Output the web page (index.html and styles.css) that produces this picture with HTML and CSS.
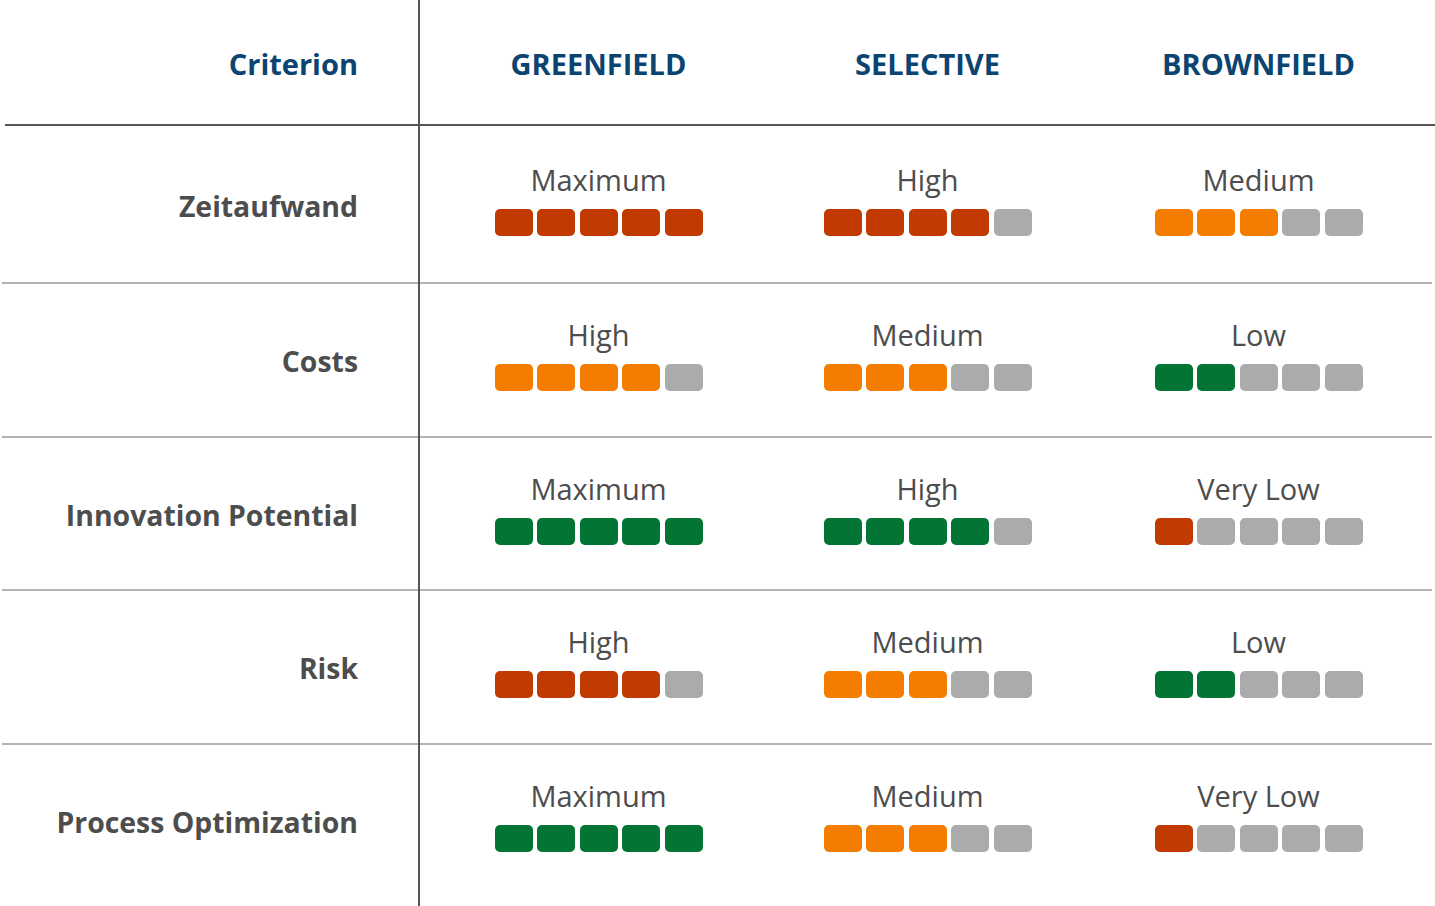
FILE: index.html
```html
<!DOCTYPE html>
<html lang="en">
<head>
<meta charset="utf-8">
<title>Criterion comparison</title>
<link rel="stylesheet" href="styles.css">
</head>
<body>
<div class="table">
  <div class="row head">
    <div class="crit">Criterion</div>
    <div class="cells">
      <div class="cell">GREENFIELD</div>
      <div class="cell">SELECTIVE</div>
      <div class="cell">BROWNFIELD</div>
    </div>
  </div>

  <div class="row first">
    <div class="crit">Zeitaufwand</div>
    <div class="cells">
      <div class="cell"><div class="level">Maximum</div><div class="bar"><span class="seg red"></span><span class="seg red"></span><span class="seg red"></span><span class="seg red"></span><span class="seg red"></span></div></div>
      <div class="cell"><div class="level">High</div><div class="bar"><span class="seg red"></span><span class="seg red"></span><span class="seg red"></span><span class="seg red"></span><span class="seg off"></span></div></div>
      <div class="cell"><div class="level">Medium</div><div class="bar"><span class="seg orange"></span><span class="seg orange"></span><span class="seg orange"></span><span class="seg off"></span><span class="seg off"></span></div></div>
    </div>
  </div>

  <div class="row">
    <div class="crit">Costs</div>
    <div class="cells">
      <div class="cell"><div class="level">High</div><div class="bar"><span class="seg orange"></span><span class="seg orange"></span><span class="seg orange"></span><span class="seg orange"></span><span class="seg off"></span></div></div>
      <div class="cell"><div class="level">Medium</div><div class="bar"><span class="seg orange"></span><span class="seg orange"></span><span class="seg orange"></span><span class="seg off"></span><span class="seg off"></span></div></div>
      <div class="cell"><div class="level">Low</div><div class="bar"><span class="seg green"></span><span class="seg green"></span><span class="seg off"></span><span class="seg off"></span><span class="seg off"></span></div></div>
    </div>
  </div>

  <div class="row">
    <div class="crit">Innovation Potential</div>
    <div class="cells">
      <div class="cell"><div class="level">Maximum</div><div class="bar"><span class="seg green"></span><span class="seg green"></span><span class="seg green"></span><span class="seg green"></span><span class="seg green"></span></div></div>
      <div class="cell"><div class="level">High</div><div class="bar"><span class="seg green"></span><span class="seg green"></span><span class="seg green"></span><span class="seg green"></span><span class="seg off"></span></div></div>
      <div class="cell"><div class="level">Very Low</div><div class="bar"><span class="seg red"></span><span class="seg off"></span><span class="seg off"></span><span class="seg off"></span><span class="seg off"></span></div></div>
    </div>
  </div>

  <div class="row">
    <div class="crit">Risk</div>
    <div class="cells">
      <div class="cell"><div class="level">High</div><div class="bar"><span class="seg red"></span><span class="seg red"></span><span class="seg red"></span><span class="seg red"></span><span class="seg off"></span></div></div>
      <div class="cell"><div class="level">Medium</div><div class="bar"><span class="seg orange"></span><span class="seg orange"></span><span class="seg orange"></span><span class="seg off"></span><span class="seg off"></span></div></div>
      <div class="cell"><div class="level">Low</div><div class="bar"><span class="seg green"></span><span class="seg green"></span><span class="seg off"></span><span class="seg off"></span><span class="seg off"></span></div></div>
    </div>
  </div>

  <div class="row last">
    <div class="crit">Process Optimization</div>
    <div class="cells">
      <div class="cell"><div class="level">Maximum</div><div class="bar"><span class="seg green"></span><span class="seg green"></span><span class="seg green"></span><span class="seg green"></span><span class="seg green"></span></div></div>
      <div class="cell"><div class="level">Medium</div><div class="bar"><span class="seg orange"></span><span class="seg orange"></span><span class="seg orange"></span><span class="seg off"></span><span class="seg off"></span></div></div>
      <div class="cell"><div class="level">Very Low</div><div class="bar"><span class="seg red"></span><span class="seg off"></span><span class="seg off"></span><span class="seg off"></span><span class="seg off"></span></div></div>
    </div>
  </div>
</div>
</body>
</html>
```

FILE: styles.css
```css
html, body {
  margin: 0;
  padding: 0;
  background: #ffffff;
}

body {
  font-family: "Open Sans", "Noto Sans", sans-serif;
  color: #4d4d4d;
}

.table {
  position: relative;
  width: 1435px;
  height: 906px;
  overflow: hidden;
  display: flex;
  flex-direction: column;
}

/* vertical divider running the full height, over the row lines */
.table::before {
  content: "";
  position: absolute;
  left: 418px;
  top: 0;
  bottom: 0;
  width: 2px;
  background: #555555;
  z-index: 1;
}

.row {
  display: flex;
  height: 151.5px;
  flex: none;
  margin-left: 2px;
  margin-right: 3px;
  border-bottom: 2px solid #b3b3b3;
}

.row.first {
  height: 156px;
}

.row.last {
  flex: 1;
  border-bottom: none;
}

.row.head {
  height: 124px;
  margin-left: 5px;
  margin-right: 0;
  border-bottom: 2px solid #555555;
  align-items: center;
}

.crit {
  width: 416px;
  box-sizing: border-box;
  flex: none;
  padding-right: 60px;
  padding-top: 60px;
  text-align: right;
  font-size: 28.4px;
  line-height: 34px;
  font-weight: 700;
  color: #4d4d4d;
}

.first .crit {
  padding-top: 63px;
}

.cells {
  display: grid;
  grid-template-columns: 329px 329px 333px;
  padding-left: 16px;
  align-items: start;
}

.cell {
  display: flex;
  flex-direction: column;
  align-items: center;
  padding-top: 34px;
}

.first .cell {
  padding-top: 37px;
}

.head .crit {
  width: 413px;
  padding-top: 3px;
  font-size: 29px;
  color: #0b4471;
}

.head .cells {
  padding-left: 16px;
  align-self: center;
}

.head .cell {
  padding-top: 3px;
  font-size: 29px;
  line-height: 34px;
  font-weight: 700;
  color: #0b4471;
}

.level {
  font-size: 29px;
  line-height: 34px;
  font-weight: 400;
  color: #4d4d4d;
}

.bar {
  display: flex;
  gap: 4.5px;
  margin-top: 12px;
}

.seg {
  width: 38px;
  height: 27px;
  border-radius: 5px;
  display: block;
}

.seg.red { background: #c13a02; }
.seg.orange { background: #f47d00; }
.seg.green { background: #027535; }
.seg.off { background: #ababab; }
```
